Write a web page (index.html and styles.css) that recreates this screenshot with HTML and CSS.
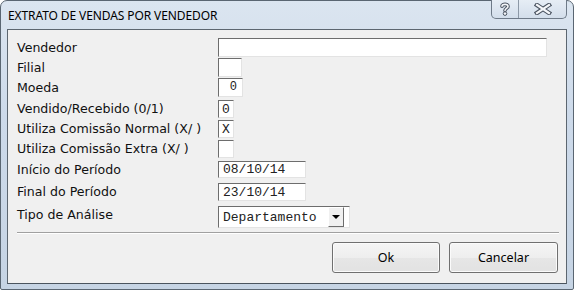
FILE: index.html
```html
<!DOCTYPE html>
<html lang="pt">
<head>
    <meta charset="UTF-8">
    <title>Extrato de Vendas por Vendedor</title>
    <link rel="stylesheet" href="styles.css">
</head>
<body>
    <div class="window">
        <div class="titlebar">
            <span class="title">EXTRATO DE VENDAS POR VENDEDOR</span>
            <div class="caption-buttons">
                <div class="cap-btn help">
                    <svg width="12" height="14" viewBox="0 0 12 14">
                        <path d="M3 4.2 C3 1.8 9 1.6 9 4.4 C9 6.4 6 6.4 6 8.6" fill="none" stroke="#4a5360" stroke-width="3.6" stroke-linecap="round"/>
                        <path d="M3 4.2 C3 1.8 9 1.6 9 4.4 C9 6.4 6 6.4 6 8.6" fill="none" stroke="#f4f6f9" stroke-width="1.6" stroke-linecap="round"/>
                        <circle cx="6" cy="11.6" r="1.8" fill="#f4f6f9" stroke="#4a5360" stroke-width="1"/>
                    </svg>
                </div>
                <div class="cap-btn close">
                    <svg width="18" height="12" viewBox="0 0 18 12">
                        <path d="M3 2 L15 10 M15 2 L3 10" stroke="#4a5360" stroke-width="4.4" stroke-linecap="square"/>
                        <path d="M3 2 L15 10 M15 2 L3 10" stroke="#f4f6f9" stroke-width="2.2" stroke-linecap="square"/>
                    </svg>
                </div>
            </div>
        </div>
        <div class="client">
            <div class="form">
                <div class="row r1">
                    <label class="label">Vendedor</label>
                    <div class="field w-vendedor"></div>
                </div>
                <div class="row r2">
                    <label class="label">Filial</label>
                    <div class="field w-filial"></div>
                </div>
                <div class="row r3">
                    <label class="label">Moeda</label>
                    <div class="field w-moeda right">0</div>
                </div>
                <div class="row r4">
                    <label class="label">Vendido/Recebido (0/1)</label>
                    <div class="field w-flag">0</div>
                </div>
                <div class="row r5">
                    <label class="label">Utiliza Comissão Normal (X/ )</label>
                    <div class="field w-flag">X</div>
                </div>
                <div class="row r6">
                    <label class="label">Utiliza Comissão Extra (X/ )</label>
                    <div class="field w-flag"></div>
                </div>
                <div class="row r7">
                    <label class="label">Início do Período</label>
                    <div class="field w-date">08/10/14</div>
                </div>
                <div class="row r8">
                    <label class="label">Final do Período</label>
                    <div class="field w-date">23/10/14</div>
                </div>
                <div class="row r9">
                    <label class="label raised">Tipo de Análise</label>
                    <div class="field select">
                        <span>Departamento</span>
                        <span class="drop"><span class="arrow"></span></span>
                    </div>
                </div>
            </div>
            <div class="separator"></div>
            <div class="actions">
                <button class="btn ok">Ok</button>
                <button class="btn cancel">Cancelar</button>
            </div>
        </div>
    </div>
</body>
</html>
```

FILE: styles.css
```css
* {
    margin: 0;
    padding: 0;
    box-sizing: border-box;
}
body {
    width: 574px;
    height: 290px;
    overflow: hidden;
    background: #fff;
}
.window {
    width: 574px;
    height: 290px;
    border: 1px solid #5a6672;
    border-radius: 7px 7px 2px 2px;
    background: linear-gradient(to bottom, #dbe5f0 0%, #cddaea 40%, #c6d4e4 100%);
    display: flex;
    flex-direction: column;
    padding: 0 6px 5px 6px;
}
.titlebar {
    height: 28px;
    display: flex;
    align-items: flex-start;
}
.title {
    font-family: "Noto Sans", "Open Sans", sans-serif;
    font-size: 12px;
    color: #000;
    margin-top: 6px;
    margin-left: 1px;
    letter-spacing: -0.1px;
}
.caption-buttons {
    margin-left: auto;
    margin-top: -1px;
    display: flex;
    height: 19px;
    border: 1px solid #6e7a88;
    border-top: none;
    border-radius: 0 0 5px 5px;
    background: linear-gradient(to bottom, #e6edf5, #d3deeb);
    overflow: hidden;
}
.cap-btn {
    display: flex;
    align-items: center;
    justify-content: center;
}
.cap-btn.help {
    width: 27px;
    border-right: 1px solid #8c98a6;
}
.cap-btn.close {
    width: 47px;
}
.client {
    flex: 1;
    background: #f0f0f0;
    border: 1px solid #5c6670;
    border-bottom-color: #4a545e;
    display: flex;
    flex-direction: column;
}
.form {
    padding: 8px 0 0 9px;
    font-family: "DejaVu Sans", Verdana, sans-serif;
    font-size: 12.6px;
    color: #111;
}
.row {
    display: flex;
    align-items: center;
}
.label {
    width: 201px;
    line-height: 16px;
    white-space: nowrap;
}
.label.raised {
    align-self: flex-start;
    margin-top: 1px;
}
.r1 { height: 19px; margin-bottom: 1px; }
.r2 { height: 19px; margin-bottom: 1px; }
.r3 { height: 19px; margin-bottom: 3px; }
.r4 { height: 18px; margin-bottom: 2px; }
.r5 { height: 18px; margin-bottom: 2px; }
.r6 { height: 18px; margin-bottom: 3px; }
.r7 { height: 17px; margin-bottom: 5px; }
.r8 { height: 18px; margin-bottom: 5px; }
.r9 { height: 22px; align-items: flex-start; }
.field {
    background: #fff;
    border: 1px solid;
    border-color: #6d6d6d #e3e3e3 #e3e3e3 #6d6d6d;
    font-family: "Liberation Mono", "Courier New", monospace;
    font-size: 13px;
    line-height: 15px;
    padding: 0 4px;
    color: #222;
    display: flex;
    align-items: center;
    height: 100%;
}
.field.right {
    justify-content: flex-end;
    padding-right: 5px;
}
.w-vendedor { width: 329px; }
.w-filial { width: 24px; }
.w-moeda { width: 25px; font-size: 12px; }
.w-flag { width: 16px; padding: 0 0 0 3px; }
.w-date { width: 88px; padding-left: 4px; }
.select {
    width: 132px;
    padding-left: 4px;
    justify-content: space-between;
}
.drop {
    width: 16px;
    height: 20px;
    margin-right: 1px;
    background: #f0f0f0;
    border: 1px solid;
    border-color: #fff #6d6d6d #6d6d6d #fff;
    display: flex;
    align-items: center;
    justify-content: center;
}
.arrow {
    width: 0;
    height: 0;
    border-left: 4px solid transparent;
    border-right: 4px solid transparent;
    border-top: 4px solid #000;
}
.separator {
    margin: 4px 7px 0 9px;
    height: 2px;
    border-top: 1px solid #a0a0a0;
    border-bottom: 1px solid #fff;
}
.actions {
    display: flex;
    justify-content: flex-end;
    gap: 9px;
    padding: 8px 8px 0 0;
}
.btn {
    height: 31px;
    font-family: "Noto Sans", "Open Sans", sans-serif;
    font-size: 12.5px;
    color: #000;
    border: 1px solid #707070;
    border-radius: 3px;
    background: linear-gradient(to bottom, #f5f5f5 0%, #eeeeee 50%, #e6e6e6 51%, #e2e2e2 100%);
    box-shadow: inset 0 0 0 1px #fbfbfb;
}
.btn.ok { width: 108px; }
.btn.cancel { width: 109px; }
```
